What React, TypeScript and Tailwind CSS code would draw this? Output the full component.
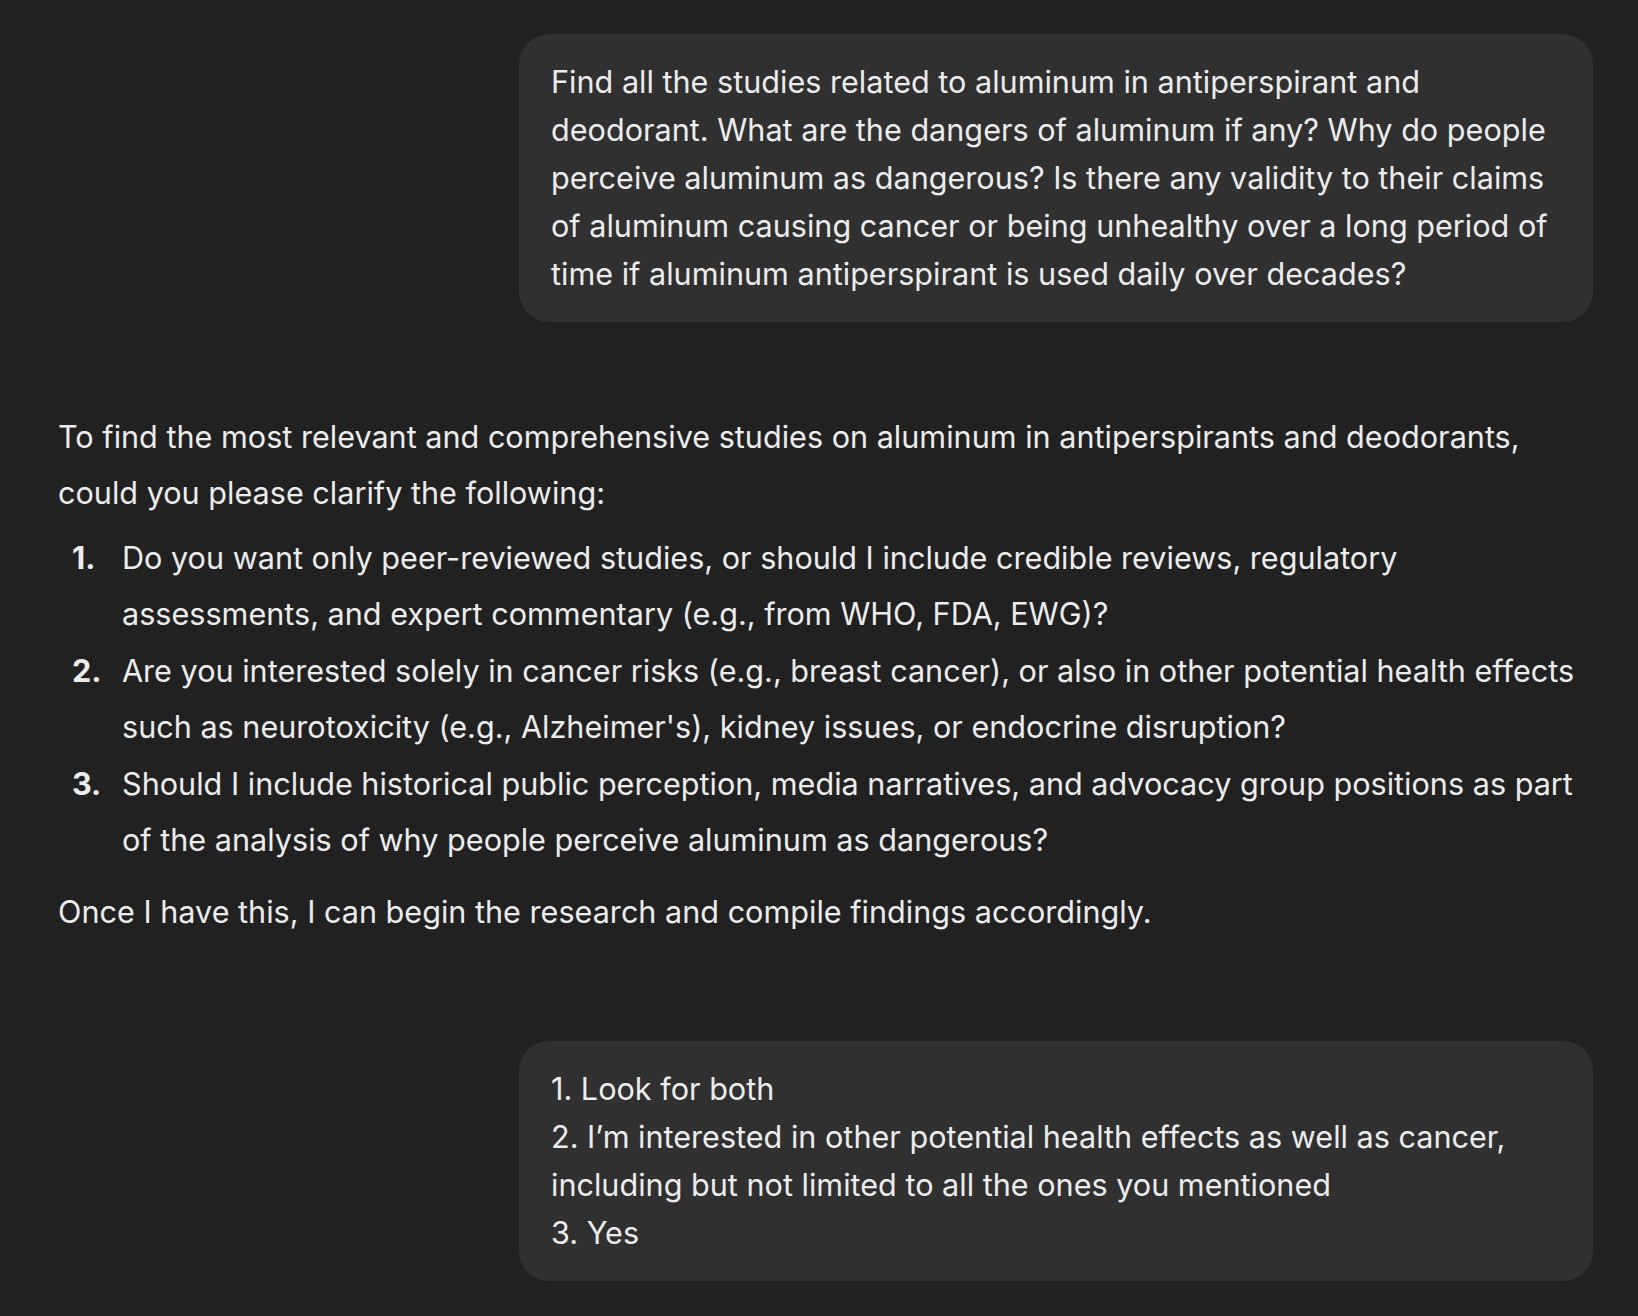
const font = { fontFamily: 'Inter, "Noto Sans", sans-serif' };

const firstQuestion = [
  'Find all the studies related to aluminum in antiperspirant and',
  'deodorant. What are the dangers of aluminum if any? Why do people',
  'perceive aluminum as dangerous? Is there any validity to their claims',
  'of aluminum causing cancer or being unhealthy over a long period of',
  'time if aluminum antiperspirant is used daily over decades?',
];

const intro = [
  'To find the most relevant and comprehensive studies on aluminum in antiperspirants and deodorants,',
  'could you please clarify the following:',
];

const questions = [
  [
    'Do you want only peer-reviewed studies, or should I include credible reviews, regulatory',
    'assessments, and expert commentary (e.g., from WHO, FDA, EWG)?',
  ],
  [
    'Are you interested solely in cancer risks (e.g., breast cancer), or also in other potential health effects',
    "such as neurotoxicity (e.g., Alzheimer's), kidney issues, or endocrine disruption?",
  ],
  [
    'Should I include historical public perception, media narratives, and advocacy group positions as part',
    'of the analysis of why people perceive aluminum as dangerous?',
  ],
];

const reply = [
  '1. Look for both',
  '2. I’m interested in other potential health effects as well as cancer,',
  'including but not limited to all the ones you mentioned',
  '3. Yes',
];

function Lines({ lines }: { lines: string[] }) {
  return (
    <>
      {lines.map((line, i) => (
        <span key={i} className="block whitespace-nowrap">
          {line}
        </span>
      ))}
    </>
  );
}

function UserBubble({ lines }: { lines: string[] }) {
  return (
    <div className="flex justify-end">
      <div className="w-[1074px] bg-[#303030] rounded-[30px] px-8 py-6 text-[30.6px] leading-[48px] text-[#ececec]">
        <Lines lines={lines} />
      </div>
    </div>
  );
}

export default function App() {
  return (
    <div
      className="min-h-screen bg-[#212121] text-[#ececec] pl-[58px] pr-[45px] pt-[34px] pb-[36px] antialiased"
      style={font}
    >
      <UserBubble lines={firstQuestion} />

      <div className="mt-[87px] text-[30.6px] leading-[56px]">
        <p>
          <Lines lines={intro} />
        </p>
        <ol className="mt-[9px] flex flex-col gap-[1px]">
          {questions.map((q, i) => (
            <li key={i} className="flex">
              <span className="w-[64px] shrink-0 pl-[14px] font-bold">{i + 1}.</span>
              <span>
                <Lines lines={q} />
              </span>
            </li>
          ))}
        </ol>
        <p className="mt-[16px]">
          Once I have this, I can begin the research and compile findings
          accordingly.
        </p>
      </div>

      <div className="mt-[101px]">
        <UserBubble lines={reply} />
      </div>
    </div>
  );
}
